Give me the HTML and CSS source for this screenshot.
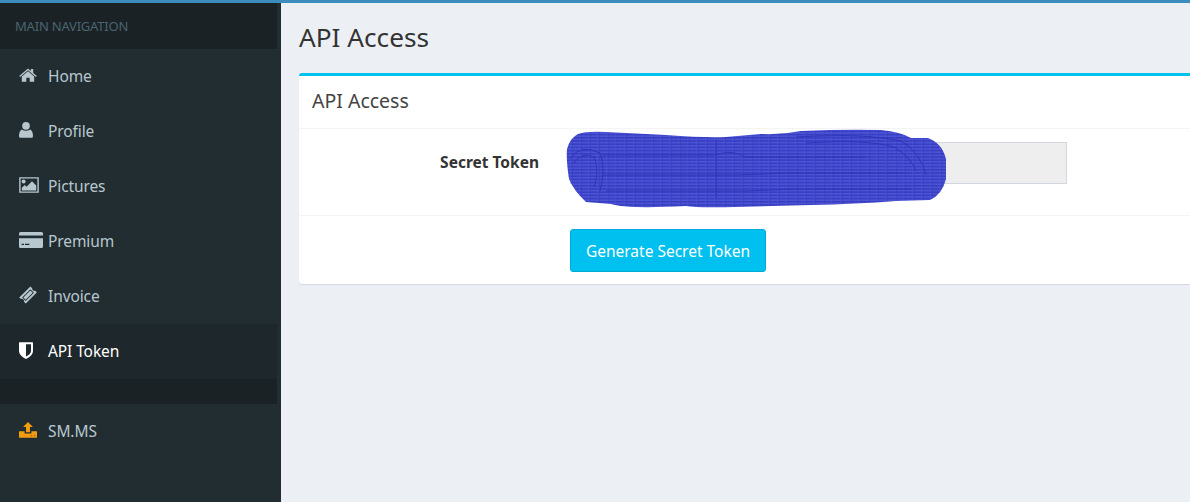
FILE: index.html
```html
<!DOCTYPE html>
<html lang="en">
<head>
  <meta charset="UTF-8">
  <title>API Access</title>
  <link rel="stylesheet" href="styles.css">
</head>
<body>

<div class="topline"></div>

<div class="wrapper">
  <aside class="sidebar">
    <ul class="menu">
      <li class="menu-header">MAIN NAVIGATION</li>
      <li class="menu-item">
        <svg class="icon icon-18" viewBox="0 0 18 14"><path d="M9 0.4 L11.9 2.9 V1 H14.2 V4.9 L17.8 8 L16.9 9 L9 2.3 L1.1 9 L0.2 8 Z M9 3.2 L15.2 8.5 V13.8 H10.7 V9.8 H7.3 V13.8 H2.8 V8.5 Z"/></svg>
        <span>Home</span>
      </li>
      <li class="menu-item">
        <svg class="icon icon-14" viewBox="0 0 14 16"><circle cx="7" cy="3.9" r="3.8"/><path d="M1 15.8 Q0 15.6 0 14 Q0 9.2 2.8 7.4 Q7 10.2 11.2 7.4 Q14 9.2 14 14 Q14 15.6 13 15.8 Z"/></svg>
        <span>Profile</span>
      </li>
      <li class="menu-item">
        <svg class="icon icon-20" viewBox="0 0 20 16"><path fill-rule="evenodd" d="M0.2 0.2 H19.8 V15.8 H0.2 Z M1.6 1.6 V14.4 H18.4 V1.6 Z"/><circle cx="4.6" cy="4.4" r="2"/><path d="M2.8 13.4 V10.8 L5.8 8 L7.6 9.8 L13 4.2 L17.2 8.4 V13.4 Z"/></svg>
        <span>Pictures</span>
      </li>
      <li class="menu-item">
        <svg class="icon icon-24" viewBox="0 0 24 16"><path d="M1.5 0 H22.5 Q24 0 24 1.5 V3.4 H0 V1.5 Q0 0 1.5 0 Z M0 6.2 H24 V14.5 Q24 16 22.5 16 H1.5 Q0 16 0 14.5 Z"/><path class="cut" d="M2.6 11.8 H5 V13 H2.6 Z M6 11.8 H10.4 V13 H6 Z"/></svg>
        <span>Premium</span>
      </li>
      <li class="menu-item">
        <svg class="icon icon-18" viewBox="0 0 18 18"><path fill-rule="evenodd" d="M11.4 0.4 L13.2 2.2 Q12.9 3.7 14.2 4.6 Q15.4 5.2 16.1 4.6 L17.8 6.4 L6.8 17.6 L5.1 15.9 Q5.6 14.5 4.4 13.4 Q3.3 12.5 2 13 L0.2 11.4 Z M11.4 3.2 L3.2 11.4 L6.7 14.9 L14.9 6.7 Z"/><path d="M11.4 4.4 L13.7 6.7 L6.7 13.7 L4.4 11.4 Z"/></svg>
        <span>Invoice</span>
      </li>
      <li class="menu-item active">
        <svg class="icon icon-14" viewBox="0 0 14 17"><path fill-rule="evenodd" d="M0.5 0.2 H13.5 Q14 0.2 14 0.8 V9 Q14 13.8 7 16.9 Q0 13.8 0 9 V0.8 Q0 0.2 0.5 0.2 Z M7 2.2 V14.6 Q12 12.2 12 9 V2.2 Z"/></svg>
        <span>API Token</span>
      </li>
      <li class="menu-spacer"></li>
      <li class="menu-item">
        <svg class="icon icon-18 icon-upload" viewBox="0 0 18 16"><path d="M9 0 L14 5 H11 V10.2 H7 V5 H4 Z M0 9.2 H5.6 V11.4 H12.4 V9.2 H18 V15.8 H0 Z"/><path class="cut-orange" d="M11.8 13.2 H13.2 V14.2 H11.8 Z M15 13.2 H16.4 V14.2 H15 Z"/></svg>
        <span>SM.MS</span>
      </li>
    </ul>
  </aside>

  <main class="content">
    <h1>API Access</h1>
    <div class="box">
      <div class="box-header">API Access</div>
      <div class="form-row">
        <label>Secret Token</label>
        <input type="text" class="token" disabled>
        <svg class="scribble" viewBox="0 0 382 82">
          <defs>
            <pattern id="scrawl" width="9" height="3.2" patternUnits="userSpaceOnUse">
              <rect width="9" height="3.2" fill="#3f47cc"/>
              <path d="M0 0.8 H9" stroke="#6068e0" stroke-width="0.7" stroke-dasharray="6 1"/>
              <path d="M0 2.4 H9" stroke="#2b33b4" stroke-width="0.8" stroke-dasharray="4 1"/>
            </pattern>
          </defs>
          <path fill="url(#scrawl)" d="M12 5 Q20 2 40 3 L100 6 Q140 9 160 8 L195 5 Q215 6 235 2 Q280 0 315 1 Q335 3 345 9 L362 9 Q376 14 380 30 V50 Q376 66 364 71 L330 72 Q290 75 245 76 L170 78 Q130 79 120 77 Q60 80 45 75 L20 73 Q8 62 3 50 Q0 30 1 20 Q4 9 12 5 Z"/>
          <g class="scrawl-lines">
            <path d="M4 30 Q14 14 34 24 Q40 40 34 62"/>
            <path d="M8 34 Q16 22 28 28 Q34 42 28 58"/>
            <path d="M36 26 H150 Q165 20 180 28 H300"/>
            <path d="M36 46 H170 L225 44 H340"/>
            <path d="M150 12 V70"/>
            <path d="M230 8 Q300 4 335 12 Q355 24 360 46"/>
            <path d="M240 14 Q300 10 328 18 Q345 28 350 42"/>
            <path d="M40 62 H180 L230 60 H345"/>
          </g>
        </svg>
      </div>
      <div class="box-footer">
        <button>Generate Secret Token</button>
      </div>
    </div>
  </main>
</div>

</body>
</html>
```

FILE: styles.css
```css
html, body {
  height: 100%;
}
body {
  margin: 0;
  overflow: hidden;
  background: #ecf0f5;
  font-family: 'Noto Sans', sans-serif;
  color: #333;
}
.topline {
  height: 3px;
  background: #3c8dbc;
}
.wrapper {
  display: flex;
  height: 499px;
}
.sidebar {
  width: 281px;
  flex-shrink: 0;
  background: #222d32;
}
.menu {
  list-style: none;
  margin: 0;
  padding: 0;
  width: 277px;
}
.menu-header {
  height: 46px;
  line-height: 46px;
  padding-left: 15px;
  font-size: 13px;
  letter-spacing: -0.2px;
  color: #4b646f;
  background: #1a2226;
}
.menu-item {
  display: grid;
  grid-template-columns: 48px 1fr;
  align-items: center;
  height: 55px;
  font-size: 15.5px;
  letter-spacing: -0.1px;
  color: #b8c7ce;
}
.menu-item span {
  padding-bottom: 2px;
}
.icon {
  display: block;
  margin-left: 19px;
  margin-bottom: 3px;
  fill: #b8c7ce;
}
.icon-14 { width: 14px; }
.icon-18 { width: 18px; }
.icon-20 { width: 20px; }
.icon-24 { width: 24px; }
.icon-upload {
  fill: #f39c12;
}
.cut {
  fill: #222d32;
}
.cut-orange {
  fill: #8a5a10;
}
.menu-item.active {
  background: #1e282c;
  color: #fff;
}
.menu-item.active .icon {
  fill: #fff;
}
.menu-spacer {
  height: 25px;
  background: #1a2226;
}
.content {
  flex: 1;
  min-width: 0;
  padding: 0 0 0 18px;
}
h1 {
  margin: 0;
  height: 70px;
  line-height: 68px;
  font-size: 26.2px;
  font-weight: 400;
}
.box {
  width: 920px;
  background: #fff;
  border-top: 3px solid #00c0ef;
  border-radius: 3px;
  box-shadow: 0 1px 1px rgba(0,0,0,0.1);
}
.box-header {
  height: 52px;
  line-height: 50px;
  padding-left: 13px;
  font-size: 19.5px;
  color: #444;
  border-bottom: 1px solid #f4f4f4;
}
.form-row {
  position: relative;
  display: flex;
  align-items: flex-start;
  height: 73px;
  padding-top: 13px;
}
.form-row label {
  width: 240px;
  text-align: right;
  font-size: 15.5px;
  line-height: 40px;
  font-weight: 700;
}
.token {
  width: 497px;
  height: 42px;
  box-sizing: border-box;
  margin-left: 31px;
  border: 1px solid #d2d6de;
  background: #eee;
}
.scribble {
  position: absolute;
  left: 267px;
  top: 0;
  width: 382px;
  height: 82px;
}
.scrawl-lines {
  fill: none;
  stroke: #2d35b8;
  stroke-width: 1;
}
.box-footer {
  height: 69px;
  box-sizing: border-box;
  padding: 13px 0 0 271px;
  border-top: 1px solid #f4f4f4;
}
button {
  width: 196px;
  height: 43px;
  padding: 0;
  border: 1px solid #00acd6;
  border-radius: 3px;
  background: #00c0ef;
  color: #fff;
  font-family: inherit;
  font-size: 15.5px;
}
```
